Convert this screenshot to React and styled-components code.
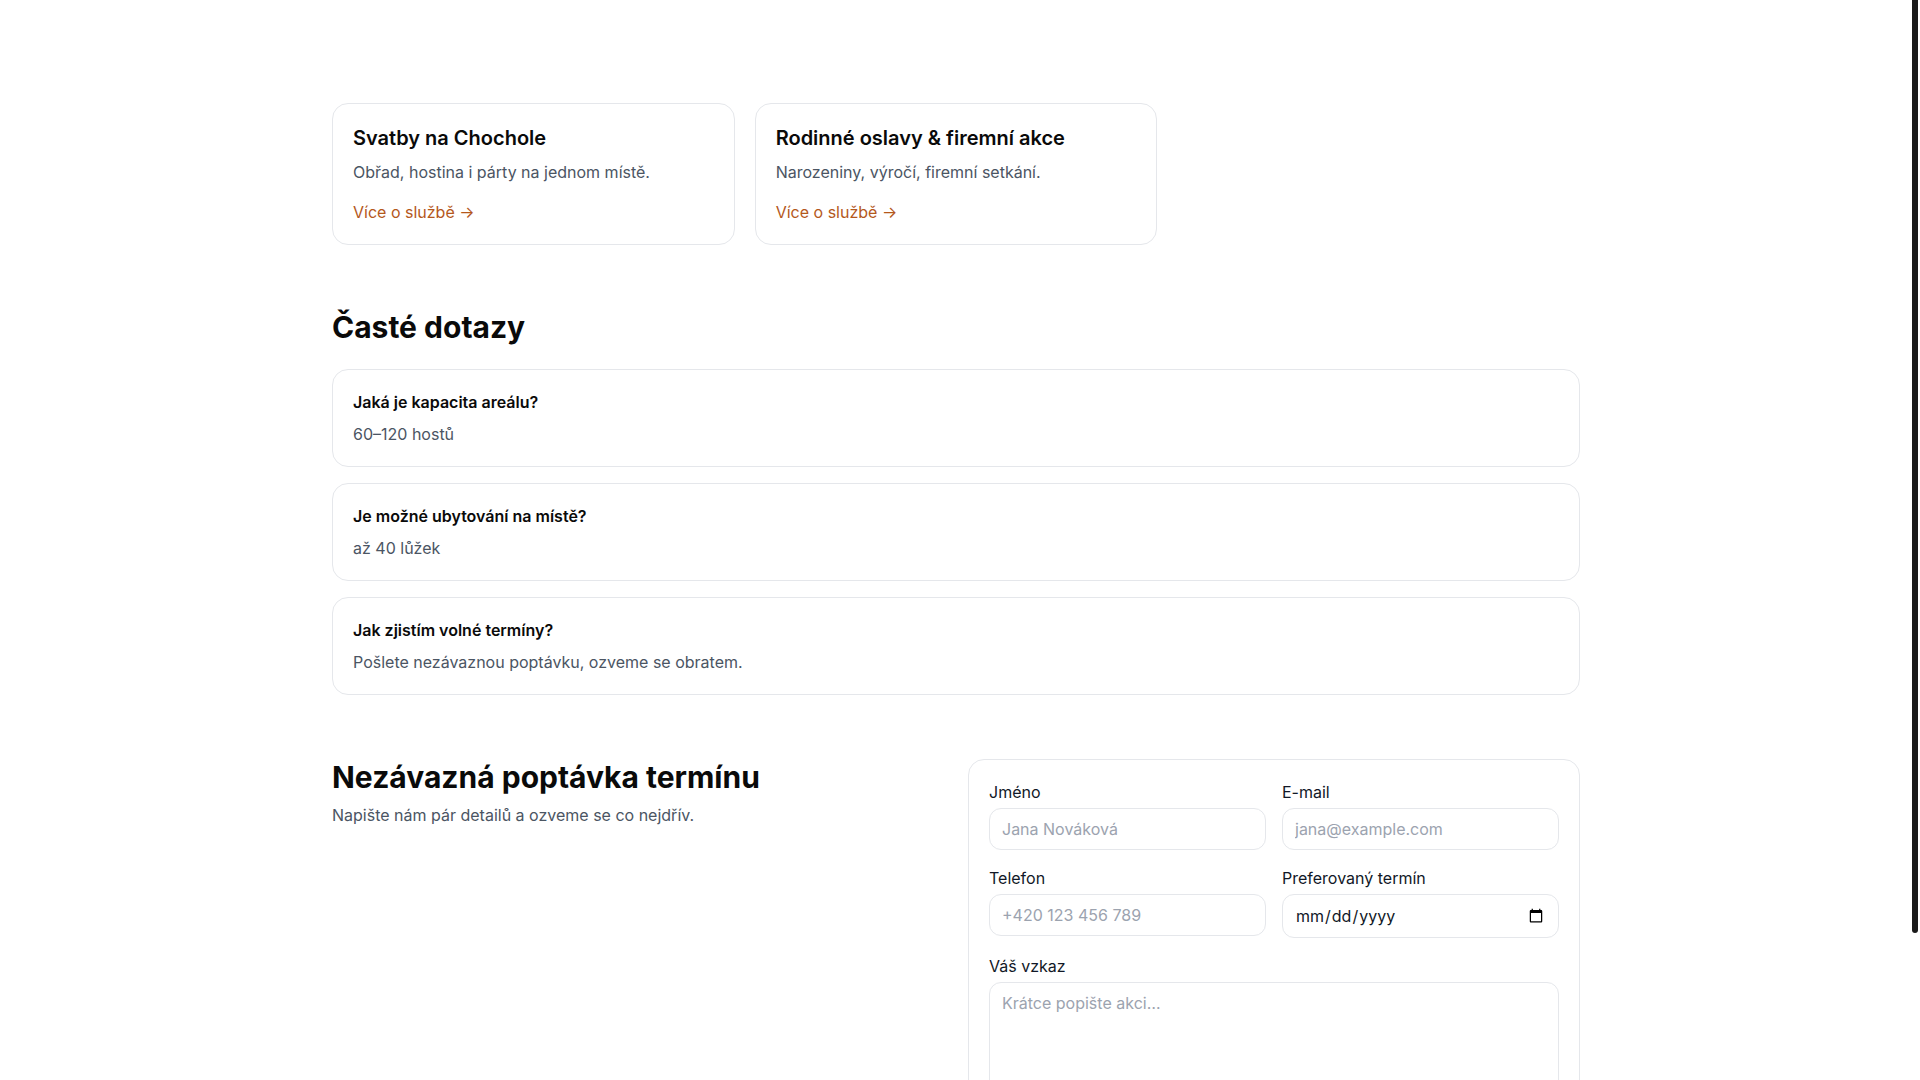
import React from "react";
import styled, { createGlobalStyle } from "styled-components";

const Global = createGlobalStyle`
  html, body { margin: 0; padding: 0; background: #ffffff; }
  html { scrollbar-width: none; }
  html::-webkit-scrollbar { width: 0; height: 0; }
  body {
    font-family: Inter, "Noto Sans", "Liberation Sans", sans-serif;
    color: #0a0a0a;
    -webkit-font-smoothing: antialiased;
    padding-right: 8px;
  }
  * { box-sizing: border-box; }
`;

/* thin overlay scroll indicator at the right edge */
const ScrollThumb = styled.div`
  position: fixed;
  top: 0;
  right: 2px;
  width: 6px;
  height: 933px;
  background: #1a1a1a;
  border-radius: 0 0 3px 3px;
  z-index: 10;
  pointer-events: none;
`;

const Page = styled.main`
  max-width: 1280px;
  margin: 0 auto;
  padding: 103px 16px 48px;
  display: flex;
  flex-direction: column;
  gap: 64px;
`;

const ServiceGrid = styled.section`
  display: grid;
  grid-template-columns: repeat(3, 1fr);
  gap: 20px;
`;

const Card = styled.article`
  background: #fff;
  border: 1px solid #e5e7eb;
  border-radius: 16px;
  padding: 20px;
`;

const CardTitle = styled.h3`
  margin: 0;
  font-size: 20px;
  line-height: 28px;
  font-weight: 600;
  color: #0a0a0a;
`;

const CardText = styled.p`
  margin: 8px 0 0;
  font-size: 16px;
  line-height: 24px;
  color: #4b5563;
`;

const MoreLink = styled.a`
  display: inline-block;
  margin-top: 16px;
  font-size: 16px;
  line-height: 24px;
  color: #b4581c;
  text-decoration: none;
`;

const SectionTitle = styled.h2`
  margin: 0 0 ${(p) => p.$mb || 0}px;
  font-size: 30px;
  line-height: 36px;
  font-weight: 700;
  color: #0a0a0a;
`;

const FaqList = styled.div`
  display: flex;
  flex-direction: column;
  gap: 16px;
`;

const FaqItem = styled.div`
  border: 1px solid #e5e7eb;
  border-radius: 16px;
  padding: 20px;
  background: #fff;
`;

const Question = styled.div`
  font-size: 16px;
  line-height: 24px;
  font-weight: 600;
  color: #0a0a0a;
`;

const Answer = styled.div`
  margin-top: 8px;
  font-size: 16px;
  line-height: 24px;
  color: #4b5563;
`;

const ContactGrid = styled.section`
  display: grid;
  grid-template-columns: 1fr 1fr;
  gap: 24px;
  align-items: start;
`;

const Lead = styled.p`
  margin: 8px 0 0;
  font-size: 16px;
  line-height: 24px;
  color: #4b5563;
`;

const Form = styled.form`
  border: 1px solid #e5e7eb;
  border-radius: 16px;
  padding: 20px;
  display: grid;
  grid-template-columns: 1fr 1fr;
  column-gap: 16px;
  row-gap: 16px;
  background: #fff;
`;

const Field = styled.label`
  display: flex;
  flex-direction: column;
  gap: 4px;
  grid-column: ${(p) => (p.$full ? "1 / -1" : "auto")};
`;

const LabelText = styled.span`
  font-size: 16px;
  line-height: 24px;
  color: #111827;
`;

const inputBase = `
  width: 100%;
  font-family: Inter, "Noto Sans", "Liberation Sans", sans-serif;
  font-size: 16px;
  line-height: 24px;
  color: #111827;
  background: #fff;
  border: 1px solid #e5e7eb;
  border-radius: 12px;
  padding: 8px 12px;
  outline: none;
  color-scheme: light;
  &::placeholder { color: #9ca3af; }
`;

const Input = styled.input`
  ${inputBase}
  min-height: 42px;
`;

const TextArea = styled.textarea`
  ${inputBase}
  height: 140px;
  resize: vertical;
`;

const Submit = styled.button`
  grid-column: 1 / -1;
  justify-self: start;
  height: 44px;
  padding: 0 20px;
  border: none;
  border-radius: 12px;
  background: #b4581c;
  color: #fff;
  font-family: Inter, "Noto Sans", "Liberation Sans", sans-serif;
  font-size: 16px;
  font-weight: 600;
  cursor: pointer;
`;

const services = [
  { title: "Svatby na Chochole", text: "Obřad, hostina i párty na jednom místě." },
  { title: "Rodinné oslavy & firemní akce", text: "Narozeniny, výročí, firemní setkání." },
];

const faqs = [
  { q: "Jaká je kapacita areálu?", a: "60–120 hostů" },
  { q: "Je možné ubytování na místě?", a: "až 40 lůžek" },
  { q: "Jak zjistím volné termíny?", a: "Pošlete nezávaznou poptávku, ozveme se obratem." },
];

export default function App() {
  return (
    <>
      <Global />
      <ScrollThumb aria-hidden="true" />
      <Page>
        <ServiceGrid>
          {services.map((s) => (
            <Card key={s.title}>
              <CardTitle>{s.title}</CardTitle>
              <CardText>{s.text}</CardText>
              <MoreLink href="#">Více o službě →</MoreLink>
            </Card>
          ))}
        </ServiceGrid>

        <section>
          <SectionTitle $mb={24}>Časté dotazy</SectionTitle>
          <FaqList>
            {faqs.map((f) => (
              <FaqItem key={f.q}>
                <Question>{f.q}</Question>
                <Answer>{f.a}</Answer>
              </FaqItem>
            ))}
          </FaqList>
        </section>

        <ContactGrid>
          <div>
            <SectionTitle>Nezávazná poptávka termínu</SectionTitle>
            <Lead>Napište nám pár detailů a ozveme se co nejdřív.</Lead>
          </div>
          <Form onSubmit={(e) => e.preventDefault()}>
            <Field>
              <LabelText>Jméno</LabelText>
              <Input type="text" placeholder="Jana Nováková" />
            </Field>
            <Field>
              <LabelText>E-mail</LabelText>
              <Input type="email" placeholder="jana@example.com" />
            </Field>
            <Field>
              <LabelText>Telefon</LabelText>
              <Input type="tel" placeholder="+420 123 456 789" />
            </Field>
            <Field>
              <LabelText>Preferovaný termín</LabelText>
              <Input type="date" />
            </Field>
            <Field $full>
              <LabelText>Váš vzkaz</LabelText>
              <TextArea placeholder="Krátce popište akci…" />
            </Field>
            <Submit type="submit">Odeslat poptávku</Submit>
          </Form>
        </ContactGrid>
      </Page>
    </>
  );
}
